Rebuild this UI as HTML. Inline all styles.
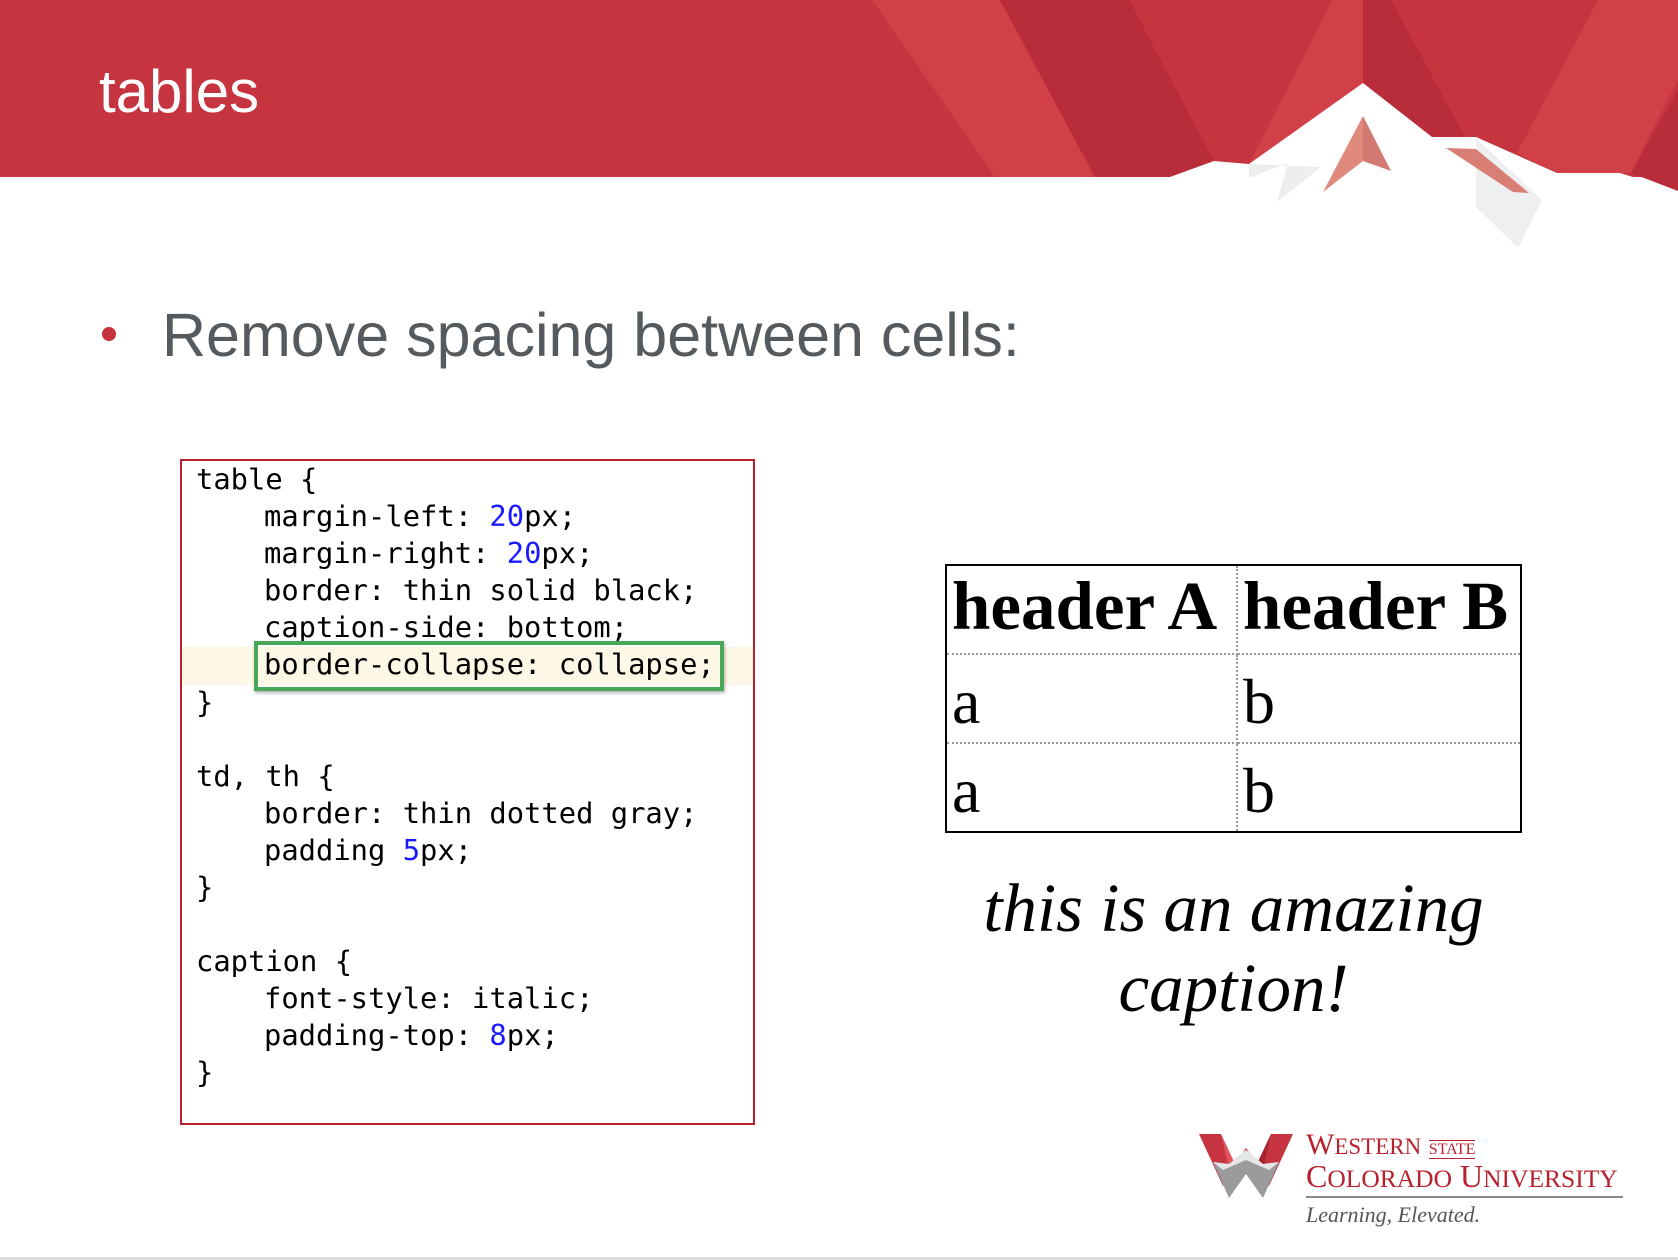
<!DOCTYPE html>
<html><head><meta charset="utf-8"><style>
*{margin:0;padding:0;box-sizing:border-box}
body{width:1678px;height:1260px;position:relative;background:#fff;overflow:hidden;font-family:"Liberation Sans",sans-serif}
.abs{position:absolute}
.title{left:99px;top:62px;font-size:60px;color:#fff;line-height:1}
.bullet{left:102px;top:327px;width:14px;height:14px;border-radius:50%;background:#c5343f}
.btext{left:162px;top:305px;font-size:61px;color:#555a5e;line-height:1;white-space:nowrap}
.code{left:180px;top:459px;width:575px;height:666px;border:2px solid #b8222e;background:#fff}
.hl{left:182px;top:647px;width:571px;height:38px;background:#fdf8e6}
.green{left:254px;top:641px;width:470px;height:50px;border:4px solid #4aa659;box-shadow:1px 2px 3px rgba(0,0,0,.3)}
.cl{position:absolute;font-family:"DejaVu Sans Mono",monospace;font-size:28.8px;color:#000;white-space:pre;line-height:1}
.n{color:#1a1aff}
table{position:absolute;left:945px;top:564px;width:577px;border-collapse:collapse;border:2px solid #000;font-family:"Liberation Serif",serif}
td,th{border:2px dotted #999;padding:0 5px;text-align:left;vertical-align:bottom}
th{font-size:69px;height:89px;line-height:1;padding-bottom:12px;white-space:nowrap}
td{font-size:64px;height:89px;line-height:1;padding-bottom:8px}
.cap{left:945px;top:868px;width:577px;text-align:center;font-family:"Liberation Serif",serif;font-style:italic;font-size:69px;line-height:80px}
</style></head><body>
<svg class="abs" style="left:0;top:0" width="1678" height="260" viewBox="0 0 1678 260">
<rect x="0" y="0" width="1678" height="177" fill="#c5343f"/>
<polygon points="872,0 1000,0 1095,177 995,177" fill="#d13f47"/>
<polygon points="1000,0 1129,0 1214,161 1170,177 1095,177" fill="#b92c3a"/>
<polygon points="1332,0 1363,0 1363,83 1249,164" fill="#d13f47"/>
<polygon points="1363,0 1391,0 1465,137 1432,137 1363,83" fill="#b92c3a"/>
<polygon points="1598,0 1678,0 1678,80 1631,173 1557,173 1517,153" fill="#d13f47"/>
<polygon points="1678,90 1678,191 1631,173" fill="#b92c3a"/>
<polygon points="0,177 1170,177 1214,161 1249,164 1363,83 1432,137 1476,137 1557,173 1620,173 1678,191 1678,260 0,260" fill="#fff"/>
<polygon points="1249,164 1249,178 1288,163 1277,202 1321,167" fill="#eceeef"/>
<polygon points="1476,138 1476,207 1518,248 1542,200" fill="#eeeff0"/>
<polygon points="1363,116 1323,192 1363,161" fill="#e08a7e"/>
<polygon points="1363,116 1391,171 1363,161" fill="#d27a72"/>
<polygon points="1446,148 1476,149 1529,193 1513,192" fill="#d97e74"/>
</svg>
<div class="abs title">tables</div>
<div class="abs bullet"></div>
<div class="abs btext">Remove spacing between cells:</div>
<div class="abs code"></div>
<div class="abs hl"></div>
<div class="cl" style="left:196px;top:465px">table {</div>
<div class="cl" style="left:264px;top:502px">margin-left: <span class="n">20</span>px;</div>
<div class="cl" style="left:264px;top:539px">margin-right: <span class="n">20</span>px;</div>
<div class="cl" style="left:264px;top:576px">border: thin solid black;</div>
<div class="cl" style="left:264px;top:613px">caption-side: bottom;</div>
<div class="abs green"></div>
<div class="cl" style="left:264px;top:650px">border-collapse: collapse;</div>
<div class="cl" style="left:196px;top:688px">}</div>
<div class="cl" style="left:196px;top:762px">td, th {</div>
<div class="cl" style="left:264px;top:799px">border: thin dotted gray;</div>
<div class="cl" style="left:264px;top:836px">padding <span class="n">5</span>px;</div>
<div class="cl" style="left:196px;top:873px">}</div>
<div class="cl" style="left:196px;top:947px">caption {</div>
<div class="cl" style="left:264px;top:984px">font-style: italic;</div>
<div class="cl" style="left:264px;top:1021px">padding-top: <span class="n">8</span>px;</div>
<div class="cl" style="left:196px;top:1058px">}</div>
<table>
<tr><th style="width:291px">header A</th><th>header B</th></tr>
<tr><td>a</td><td>b</td></tr>
<tr><td>a</td><td>b</td></tr>
</table>
<div class="abs cap">this is an amazing<br>caption!</div>
<svg class="abs" style="left:1199px;top:1134px" width="94" height="66" viewBox="0 0 94 66">
<polygon points="0,0 22,0 36,30 47,14 58,30 72,0 94,0 70,52 47,30 24,52" fill="#c5343f"/>
<polygon points="22,0 36,30 30,36" fill="#e0535a"/>
<polygon points="72,0 58,30 64,36" fill="#a8232f"/>
<polygon points="14,28 30,30 47,16 64,30 80,28 64,64 47,40 30,64" fill="#9a9b9d"/>
<polygon points="14,28 30,30 47,16 64,30 80,28 70,36 47,26 24,36" fill="#e5e6e7"/>
</svg>
<div class="abs" style="left:1306px;top:1130px;font-family:'Liberation Serif',serif;color:#b8222e;font-size:30px;line-height:1;white-space:nowrap">W<span style="font-size:23px">ESTERN</span> <span style="font-size:16px;border-top:1px solid #b8222e;border-bottom:1px solid #b8222e">STATE</span></div>
<div class="abs" style="left:1306px;top:1160px;font-family:'Liberation Serif',serif;color:#b8222e;font-size:32px;line-height:1;white-space:nowrap">C<span style="font-size:25.5px">OLORADO</span> U<span style="font-size:25.5px">NIVERSITY</span></div>
<div class="abs" style="left:1306px;top:1196px;width:317px;height:2px;background:#888"></div>
<div class="abs" style="left:1306px;top:1204px;font-family:'Liberation Serif',serif;font-style:italic;color:#555;font-size:22px;line-height:1">Learning, Elevated.</div>
<div class="abs" style="left:0;top:1257px;width:1678px;height:3px;background:#ddd"></div>
</body></html>
